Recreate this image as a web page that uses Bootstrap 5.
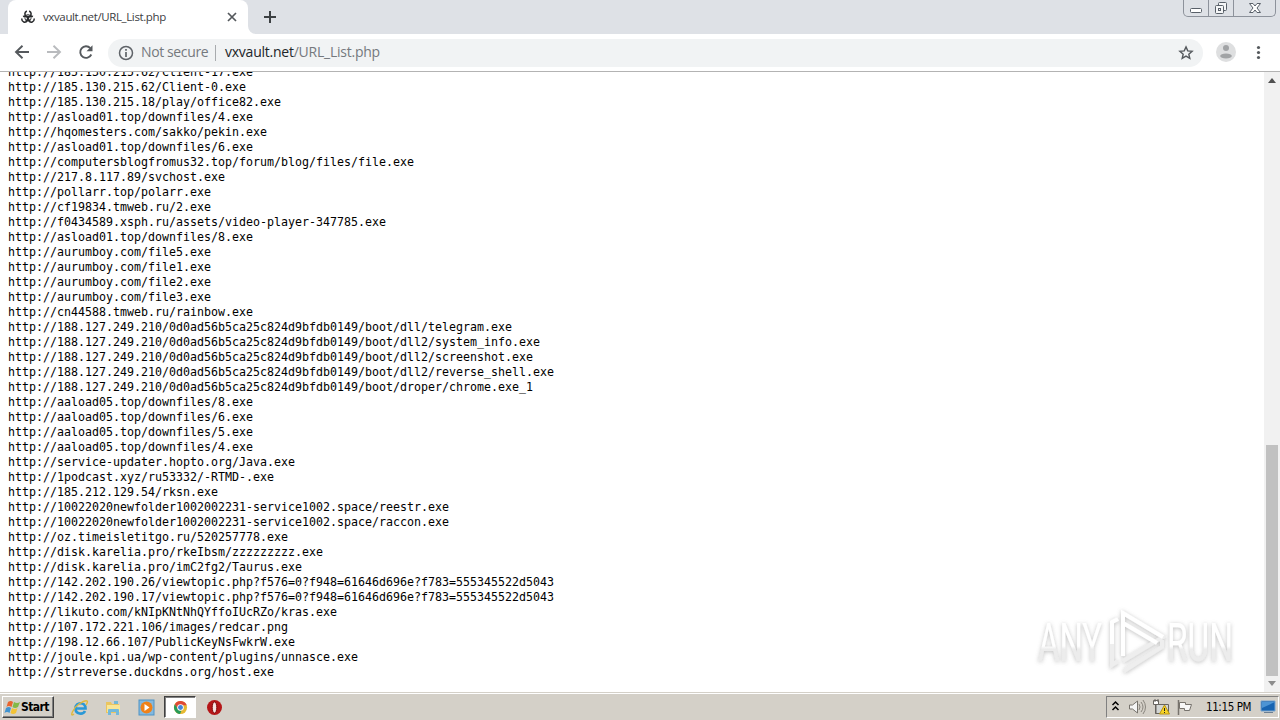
<!DOCTYPE html>
<html lang="en">
<head>
<meta charset="utf-8">
<title>vxvault.net/URL_List.php</title>
<link href="https://cdn.jsdelivr.net/npm/bootstrap@5.3.0/dist/css/bootstrap.min.css" rel="stylesheet">
<style>
body{width:1280px;height:720px;background:#fff;color:#202124;font-family:"Open Sans","Noto Sans",sans-serif;line-height:1}
svg{display:block;flex:none}
.tabstrip{height:34px;background:#dee1e6;padding-left:8px}
.browser-tab{width:240px;height:34px;background:#fff;border-radius:8px 8px 0 0;padding:0 10px 0 13px;font-size:11.5px;color:#3c4043}
.tab-title{letter-spacing:-.38px;margin-left:8px}
.caption-buttons{width:93px;height:17px;border:1px solid #8d929b;border-top:0;border-radius:0 0 5px 5px;margin-right:4px}
.caption-buttons>div{height:16px}
.caption-buttons>div+div{border-left:1px solid #8d929b}
.toolbar{height:38px;border-bottom:1px solid #b3b3b3;padding-left:14px}
.omnibox{width:1095px;height:28px;background:#f1f3f4;border-radius:14px;margin-left:14px;padding:0 9px 0 10px;font-size:14px;color:#75797e}
.omnibox-text{white-space:nowrap;padding-bottom:2px}
.page-area{height:620px}
.url-list{margin:-7px 0 0 8px;font:11.63px/15px "DejaVu Sans Mono","Liberation Mono",monospace;color:#000;overflow:visible}
.scroll{width:16px;background:#f1f1f1}
.thumb{width:12px;height:231px;background:#c1c1c1;margin-top:356px}
.watermark{left:1030px;top:532px;overflow:visible}
.taskbar{height:28px;background:#d4d0c8;border-top:1px solid #d4d0c8;box-shadow:inset 0 1px #fff;font-family:"DejaVu Sans Condensed","DejaVu Sans",sans-serif;color:#000;padding:3px 1px 0 2px}
.start{width:52px;height:22px;border:1px solid;border-color:#fff #404040 #404040 #fff;box-shadow:inset -1px -1px #808080;font-size:12px;font-weight:700;letter-spacing:-.55px;padding-left:1px}
.active-app{width:32px;height:22px;background:#fff;border:1px solid;border-color:#404040 #fff #fff #404040;box-shadow:inset 1px 1px #808080}
.tray{width:173px;height:22px;border:1px solid;border-color:#808080 #fff #fff #808080;font-size:11.5px}
</style>
</head>
<body class="d-flex flex-column overflow-hidden">
<header class="tabstrip d-flex">
  <div class="browser-tab d-flex align-items-center">
    <svg width="14" height="14" viewBox="0 0 14 14" fill="none" stroke="#292b2d"><path d="M5.800 1C2.800 2.500 3.500 6.500 7 6.500S11.200 2.500 8.200 1M.800 8.500C.500 12 4.500 13.500 6.300 10.500S4.500 5.500 2 6.500M13.200 8.500c.300 3.500-3.700 5-5.500 2S9.500 5.500 12 6.500" stroke-width="1.500"/><circle cx="7" cy="7.800" r="3.200" stroke-width=".9"/><path d="M7 6v2l-2 3m2-3 2 3" stroke-width="1.200"/></svg>
    <span class="tab-title">vxvault.net/URL_List.php</span>
    <svg class="ms-auto" width="12" height="12" viewBox="0 0 12 12" stroke="#54585c" stroke-width="1.700"><path d="m2 2 8 8m0-8-8 8"/></svg>
  </div>
  <svg width="44" height="34" viewBox="0 0 44 34"><path d="M0 26v8h8a8 8 0 0 1-8-8" fill="#fff"/><path d="M22 11v12M16 17h12" stroke="#3c4043" stroke-width="2"/></svg>
  <div class="caption-buttons d-flex ms-auto">
    <div style="width:25px"><svg width="24" height="16" fill="#fff" stroke="#596069"><rect x="6.500" y="8.500" width="11" height="4" rx="1"/></svg></div>
    <div style="width:25px"><svg width="24" height="16" fill="#f5f6f7" stroke="#596069"><rect x="9.500" y="2.500" width="8" height="8" rx="1"/><rect x="6.500" y="5.500" width="8" height="8" rx="1"/><rect x="9.500" y="8.500" width="2" height="2"/></svg></div>
    <div class="flex-fill"><svg width="41" height="16"><path d="M15.500 3.500h3.500l2 2.500 2-2.500h3.500L23 8l3.500 4.500H23l-2-2.500-2 2.500h-3.500L19 8z" fill="#fff" stroke="#596069"/></svg></div>
  </div>
</header>
<nav class="toolbar d-flex align-items-center flex-shrink-0">
  <svg style="margin-top:-1px" width="80" height="18" viewBox="0 0 80 18" fill="none" stroke="#55595d" stroke-width="1.900"><path d="M15 9H2m6.500-6.300L2 9l6.500 6.300"/><path d="M33 9h13m-6.500-6.300L46 9l-6.500 6.300" stroke="#b9bbbe"/><path d="M77.300 11.500a5.800 5.800 0 1 1-1-6.400"/><path d="M78.500 2.300v6h-6z" fill="#55595d" stroke="none"/></svg>
  <div class="omnibox d-flex align-items-center">
    <svg width="16" height="16" viewBox="0 0 16 16"><circle cx="8" cy="8" r="6.500" fill="none" stroke="#5f6368" stroke-width="1.500"/><path d="M8 7v5M8 4v1.700" stroke="#5f6368" stroke-width="1.700"/></svg>
    <span class="omnibox-text" style="width:67px;margin-left:7px;letter-spacing:-.38px">Not secure</span>
    <span style="width:1px;height:16px;background:#a8abae;margin:0 9px 0 7px"></span>
    <span class="omnibox-text" style="letter-spacing:-.24px"><span class="text-dark">vxvault.net</span>/URL_List.php</span>
    <svg class="ms-auto" width="16" height="16" viewBox="0 0 16 16" fill="none" stroke="#55595d" stroke-width="1.400"><path d="m8 1.900 1.750 4 4.350.4-3.300 2.850 1 4.250L8 11.150 4.200 13.400l1-4.250L1.900 6.300l4.350-.4z"/></svg>
  </div>
  <svg style="margin-top:-2px" width="65" height="24" viewBox="0 0 65 24"><circle cx="23" cy="12" r="10" fill="#dedfe0"/><circle cx="23" cy="8" r="3" fill="#a1a3a5"/><ellipse cx="23" cy="16" rx="5.800" ry="2.600" fill="#a1a3a5"/><g fill="#55595d"><circle cx="55.500" cy="7.500" r="1.600"/><circle cx="55.500" cy="12.500" r="1.600"/><circle cx="55.500" cy="17.500" r="1.600"/></g></svg>
</nav>
<main class="page-area position-relative d-flex overflow-hidden flex-shrink-0">
<pre class="url-list">http://185.130.215.62/Client-17.exe
http://185.130.215.62/Client-0.exe
http://185.130.215.18/play/office82.exe
http://asload01.top/downfiles/4.exe
http://hqomesters.com/sakko/pekin.exe
http://asload01.top/downfiles/6.exe
http://computersblogfromus32.top/forum/blog/files/file.exe
http://217.8.117.89/svchost.exe
http://pollarr.top/polarr.exe
http://cf19834.tmweb.ru/2.exe
http://f0434589.xsph.ru/assets/video-player-347785.exe
http://asload01.top/downfiles/8.exe
http://aurumboy.com/file5.exe
http://aurumboy.com/file1.exe
http://aurumboy.com/file2.exe
http://aurumboy.com/file3.exe
http://cn44588.tmweb.ru/rainbow.exe
http://188.127.249.210/0d0ad56b5ca25c824d9bfdb0149/boot/dll/telegram.exe
http://188.127.249.210/0d0ad56b5ca25c824d9bfdb0149/boot/dll2/system_info.exe
http://188.127.249.210/0d0ad56b5ca25c824d9bfdb0149/boot/dll2/screenshot.exe
http://188.127.249.210/0d0ad56b5ca25c824d9bfdb0149/boot/dll2/reverse_shell.exe
http://188.127.249.210/0d0ad56b5ca25c824d9bfdb0149/boot/droper/chrome.exe_1
http://aaload05.top/downfiles/8.exe
http://aaload05.top/downfiles/6.exe
http://aaload05.top/downfiles/5.exe
http://aaload05.top/downfiles/4.exe
http://service-updater.hopto.org/Java.exe
http://1podcast.xyz/ru53332/-RTMD-.exe
http://185.212.129.54/rksn.exe
http://10022020newfolder1002002231-service1002.space/reestr.exe
http://10022020newfolder1002002231-service1002.space/raccon.exe
http://oz.timeisletitgo.ru/520257778.exe
http://disk.karelia.pro/rkeIbsm/zzzzzzzzz.exe
http://disk.karelia.pro/imC2fg2/Taurus.exe
http://142.202.190.26/viewtopic.php?f576=0?f948=61646d696e?f783=555345522d5043
http://142.202.190.17/viewtopic.php?f576=0?f948=61646d696e?f783=555345522d5043
http://likuto.com/kNIpKNtNhQYffoIUcRZo/kras.exe
http://107.172.221.106/images/redcar.png
http://198.12.66.107/PublicKeyNsFwkrW.exe
http://joule.kpi.ua/wp-content/plugins/unnasce.exe
http://strreverse.duckdns.org/host.exe</pre>
  <svg class="watermark position-absolute" width="212" height="76" viewBox="0 0 212 76">
    <defs><filter id="soft" x="-10%" y="-10%" width="120%" height="125%"><feDropShadow dx="0" dy="1" stdDeviation="2" flood-color="#777" flood-opacity=".48"/></filter>
    <linearGradient id="fade" x1="0" x2="0" y1="0" y2="1"><stop offset=".55" stop-color="#fff"/><stop offset=".6" stop-color="#ececec"/></linearGradient></defs>
    <g filter="url(#soft)"><g fill="url(#fade)" font-family="Roboto,sans-serif" font-size="53"><text x="8" y="57" textLength="64" lengthAdjust="spacingAndGlyphs">ANY</text><text x="137" y="57" textLength="66" lengthAdjust="spacingAndGlyphs">RUN</text></g>
    <g fill="none" stroke-width="4"><path d="M93 52V9l40 24-40 24" stroke="#eee"/><path d="M93 52V9l40 24M93 19l34 20" stroke="#fff"/><path d="M88 15l-6 3v43l6-4m6 10 38-24v-7" stroke="#eee"/><path d="M88 15l-6 3v22" stroke="#fff"/></g></g>
  </svg>
  <div class="scroll ms-auto d-flex flex-column align-items-center">
    <svg width="16" height="17"><path d="m4 11 4-5 4 5z" fill="#505050"/></svg>
    <div class="thumb"></div>
    <svg class="mt-auto" width="16" height="16"><path d="m4 5 4 5 4-5z" fill="#8d8d8d"/></svg>
  </div>
</main>
<footer class="taskbar d-flex flex-shrink-0">
  <div class="start d-flex align-items-center"><svg width="17" height="17" viewBox="0 0 17 17"><path d="M4 3q3-2 5 0L7.500 8q-3-2-5 0z" fill="#e9642e"/><path d="M10 3q3 2 6 0l-2 5q-3 2-5.500 0z" fill="#83b947"/><path d="M2 9q3-2 5 0l-1.500 5q-2.500-2-5 0z" fill="#4193d0"/><path d="M8 9q3 2 5.500 0L12 14q-3 2-5.500 0z" fill="#f3c336"/></svg><span>Start</span></div>
  <div class="d-flex align-items-center" style="margin-left:17px;gap:16px">
    <svg width="18" height="18" viewBox="0 0 18 18" fill="none"><path d="M4.500 9.500h10c0-7-10-7-10 0 0 6 7.500 6.500 9.500 2.500" stroke="#2a98d6" stroke-width="2.700"/><path d="M3 15C-2 19 2 9 8 5s11-5 7 1" stroke="#e1b83c" stroke-width="1.400"/></svg>
    <svg width="17" height="18" viewBox="0 0 17 18"><path d="M1 3h5l1 2h7v9H1z" fill="#eac55f"/><path d="M2 6h13v7H2z" fill="#f9e696"/><path d="M3 16v-5q0-1 1-1h9q1 0 1 1v5h-3v-3H6v3z" fill="#72b9db"/><path d="M9 2h4v3H9z" fill="#73b8d7"/></svg>
    <svg width="17" height="18" viewBox="0 0 17 18"><rect x="1" y="1" width="15" height="15" fill="#83b9df" stroke="#4e93c5"/><circle cx="8.500" cy="8.500" r="6" fill="#ef8119"/><path d="M6.500 5v7l5-3.500z" fill="#fff"/></svg>
  </div>
  <div class="active-app d-flex align-items-center justify-content-center" style="margin-left:9px"><svg width="15" height="15" viewBox="0 0 16 16"><circle cx="8" cy="8" r="7" fill="#e6b933"/><path d="M2 4.500a7 7 0 0 1 12.600 1H8L5 10z" fill="#df4936"/><path d="M2 4.500 6 11l3 .500L7.500 15A7 7 0 0 1 2 4.500" fill="#279b59"/><circle cx="8" cy="8" r="3.500" fill="#fff"/><circle cx="8" cy="8" r="2.600" fill="#4285d9"/></svg></div>
  <svg style="margin:3px 0 0 10px" width="17" height="17" viewBox="0 0 17 17"><circle cx="8.500" cy="8.500" r="7.500" fill="#b51618"/><ellipse cx="8.500" cy="8.500" rx="2.300" ry="5.600" fill="#f7e4e1" stroke="#7f0809"/></svg>
  <div class="tray d-flex align-items-center ms-auto">
    <svg width="94" height="20" viewBox="0 0 94 20" fill="none"><path d="m5.500 8 3-3 3 3m-6 5 3-3 3 3" stroke="#000" stroke-width="1.500"/><path d="M22.500 8h3l5-4v12l-5-4h-3z" fill="#f5f5f5" stroke="#77736d"/><path d="M32 7q2 3 0 6m2-8q4 5 0 10m2-12q5 7 0 14" stroke="#89857e"/><path d="M48.500 7.500h13v9h-13z" fill="#d2d5d4" stroke="#66635e"/><path d="M46.500 3.500h5v4h-5zM49 7v10M48 2v3m3-3v3" fill="#fff" stroke="#66635e"/><path d="m57.500 8 5 9h-10z" fill="#f7d426" stroke="#b99413"/><path d="M57.500 11v3m0 1v1" stroke="#222"/><path d="M71.500 3v15" stroke="#77736d" stroke-width="1.500"/><path d="M72.500 5.500h6v2h6l-2 6h-5v-2h-5z" fill="#f7f7f7" stroke="#77736d"/></svg>
    <span style="width:46px;margin:2px 0 0 5px;white-space:nowrap;letter-spacing:-.4px">11:15 PM</span>
    <svg style="margin-left:8px" width="17" height="16"><path d="M1 2h14v10H1z" fill="#1764b1" stroke="#79a4ce"/><path d="M2 3h13L2 9z" fill="#4c94d4"/><path d="M4 13h9v1H4z" fill="#6c7f93"/></svg>
  </div>
</footer>
<script src="https://cdn.jsdelivr.net/npm/bootstrap@5.3.0/dist/js/bootstrap.bundle.min.js"></script>
</body>
</html>
